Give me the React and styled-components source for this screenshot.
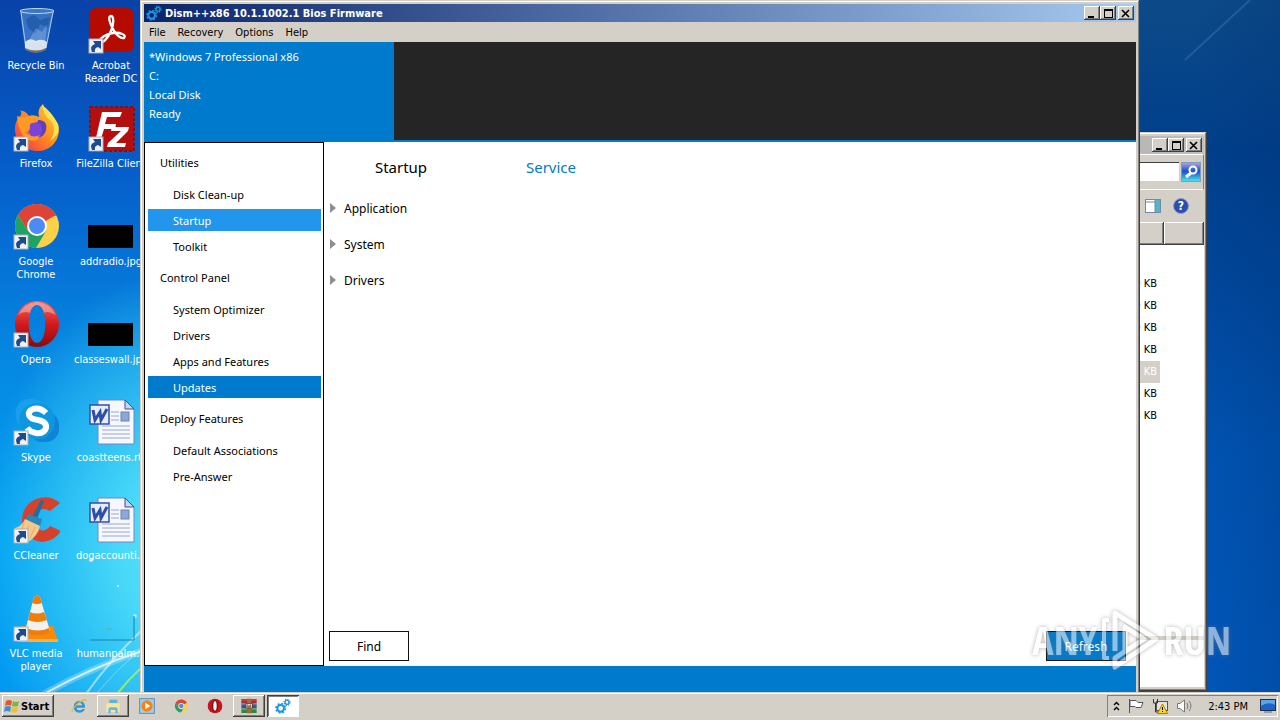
import React from 'react'
import styled, { createGlobalStyle } from 'styled-components'


const desktopIcons = [
    { name: 'Recycle Bin', icon: 'bin' },
    { name: 'Firefox', icon: 'firefox', shortcut: true },
    { name: 'Google Chrome', icon: 'chrome', shortcut: true, wrap: true },
    { name: 'Opera', icon: 'opera', shortcut: true },
    { name: 'Skype', icon: 'skype', shortcut: true },
    { name: 'CCleaner', icon: 'ccleaner', shortcut: true },
    { name: 'VLC media player', icon: 'vlc', shortcut: true, wrap: true },
    { name: 'Acrobat Reader DC', icon: 'acrobat', shortcut: true, wrap: true },
    { name: 'FileZilla Client', icon: 'filezilla', shortcut: true },
    { name: 'addradio.jpg', icon: 'black' },
    { name: 'classeswall.jpg', icon: 'black' },
    { name: 'coastteens.rtf', icon: 'word' },
    { name: 'dogaccounti...', icon: 'word' },
    { name: 'humanpalm...', icon: 'faded' },
]

const sections = [
    { title: 'Utilities', items: ['Disk Clean-up', 'Startup', 'Toolkit'] },
    { title: 'Control Panel', items: ['System Optimizer', 'Drivers', 'Apps and Features', 'Updates'] },
    { title: 'Deploy Features', items: ['Default Associations', 'Pre-Answer'] },
]

const itemColors = { Startup: '#2196ec', Updates: '#007acc' }

const files = ['0 KB', '0 KB', '0 KB', '7 KB', '2 KB', '1 KB', '8 KB']

const taskbarItems = [
    { label: 'Internet Explorer', icon: 'ie' },
    { label: 'Windows Explorer', icon: 'folder', look: 'raised' },
    { label: 'Media Player', icon: 'wmp' },
    { label: 'Chrome', icon: 'chrome' },
    { label: 'Opera', icon: 'operaRed' },
    { label: 'WinRAR', icon: 'winrar', look: 'raised' },
    { label: 'Dism++', icon: 'gears', look: 'pressed' },
]


const art = {
    bin: (
        <>
            <path d="M8 5 L13 43 Q24 49 34 43 L42 5Z" fill="#7fb4e6" fillOpacity=".4" />
            <path d="M9 6 L14 42 M41 6 L34 42" stroke="#c9dff2" strokeOpacity=".8" />
            <path d="M14 13 L22 9 L28 14 L38 11 L36 22 L28 18 L24 28 L16 22Z" fill="#164f9c" fillOpacity=".55" />
            <path d="M16 36 L24 22 L30 26 L35 18 L33 38Z" fill="#b9d7f2" fillOpacity=".3" />
            <path d="M13 36 Q18 31 24 35 Q30 32 35 36 L34 43 Q24 48 13 43Z" fill="#e8eef2" fillOpacity=".9" />
            <path d="M13 42 Q24 47 34 42 L34 44 Q24 50 13 44Z" fill="#776f64" />
            <ellipse cx="25" cy="5" rx="17" ry="2.5" fill="#3a78bc" stroke="#c3d6e8" />
        </>
    ),
    firefox: (
        <>
            <path d="M3 25 C3 17 7 13 9 11 Q10 6 7 7 Q13 6 17 12 Q22 10 27 13 Q25 5 31 0 Q33 7 39 11 Q47 19 47 27 C46 39 37 47 26 47 C13 47 3 38 3 25Z" fill="url(#fox)" />
            <path d="M30 1 Q32 12 38 16 Q46 24 38 37 Q49 30 46 20 Q39 7 30 1Z" fill="#ffe14b" />
            <circle cx="25" cy="25" r="9" fill="#7b43d9" />
            <path d="M5 12 Q13 15 17 12 Q22 11 27 16 Q25 19 20 19 Q17 20 18 24 Q17 28 13 28 Q20 35 28 31 Q26 40 14 35 Q6 27 5 12Z" fill="#ff9a26" />
            <path d="M26 16 Q36 16 34 26 Q31 33 25 33 Q31 31 30 24 Q30 20 26 19Z" fill="#5b43b5" />
        </>
    ),
    chrome: (
        <>
            <circle cx="25" cy="24" r="22" fill="#fdd04a" />
            <path d="M25 24 L6 13 A22 22 0 0 1 44 13Z" fill="#db4437" />
            <path d="M25 14 L44 14 A22 22 0 0 0 6 13 L16 29Z" fill="#db4437" />
            <path d="M6 13 A22 22 0 0 0 24 46 L34 29 L25 34 L16 29Z" fill="#1da362" />
            <circle cx="25" cy="24" r="10" fill="#fff" />
            <circle cx="25" cy="24" r="8" fill="#4c8bf5" />
        </>
    ),
    opera: (
        <>
            <path fillRule="evenodd" d="M25 1 A22 23 0 1 1 24.9 1Z M25 5 C14 5 14 43 25 43 C36 43 36 5 25 5Z" fill="url(#operaRed)" />
            <path d="M6 15 Q12 3 25 2 Q38 3 44 15 Q35 10 32 13 Q30 5 25 5 Q20 5 18 13 Q12 10 6 15Z" fill="#fff" fillOpacity=".35" />
        </>
    ),
    operaRed: (
        <>
            <circle cx="24" cy="24" r="22" fill="#c8141c" />
            <ellipse cx="24" cy="24" rx="10" ry="18" fill="#8a0d12" />
            <ellipse cx="24" cy="24" rx="5" ry="14" fill="#fff" />
        </>
    ),
    skype: (
        <>
            <rect x="4" y="1" width="30" height="30" rx="13" fill="#1aa0ea" />
            <rect x="17" y="14" width="30" height="30" rx="13" fill="#0f83d6" />
            <circle cx="25" cy="23" r="18" fill="#0d97e0" />
            <path d="M34 15 Q28 9 21 11 Q16 13 17 17 Q18 21 26 22 Q35 24 34 30 Q32 36 24 35 Q18 34 15 30" fill="none" stroke="#fff" strokeWidth="6" />
        </>
    ),
    ccleaner: (
        <>
            <path d="M48 7 Q38 -2 24 3 Q9 10 10 27 Q13 44 30 46 Q43 45 49 35 L38 30 Q33 37 26 33 Q19 27 23 18 Q30 10 38 15Z" fill="#d7402b" />
            <path d="M29 4 L32 5 L25 23 L20 21Z" fill="#1d6f9f" />
            <path d="M16 18 L30 23 L28 31 L13 25Z" fill="#2c87b8" />
            <path d="M13 23 L28 30 Q26 40 16 46 L3 43 Q1 36 3 32 Q10 30 13 23Z" fill="#f3c98b" />
            <path d="M12 27 L7 42 M17 30 L12 44 M23 31 L18 42" stroke="#dcae74" strokeWidth="1" />
        </>
    ),
    vlc: (
        <>
            <path d="M9 32 L41 32 L46 47 L6 47Z" fill="#f58a0c" />
            <path d="M6 45 H46 V48 H6Z" fill="#ffb13c" />
            <path d="M22 3 Q25 0 28 3 L38 37 Q26 44 13 37Z" fill="#f3f1ee" />
            <path d="M22 3 Q25 0 28 3 L30 9 Q25 11 20 9Z M18 18 Q25 21 32 18 L35 26 Q25 30 16 26Z M14 34 Q26 39 37 34 L38 38 Q26 45 12 38Z" fill="#f07d0a" />
        </>
    ),
    acrobat: (
        <>
            <rect x="2" y="2" width="45" height="44" rx="7" fill="#b30b00" />
            <path d="M24 10 C21 10 22 16 26 23 C29 29 34 33 37 32 C40 29 33 26 26 27 C19 28 13 32 13 35 C15 39 21 32 24 25 C27 18 27 10 24 10Z" fill="none" stroke="#fff" strokeWidth="2.4" />
        </>
    ),
    filezilla: (
        <>
            <rect x="3" y="3" width="44" height="44" fill="#b50e0e" stroke="#7f1212" strokeWidth="2" strokeDasharray="3 2" />
            <path d="M15 8 H35 L33 13 H20 L18 20 H29 L28 25 H17 L13 38 H8Z" fill="#fff" />
            <path d="M25 23 H42 L41 27 L29 39 H39 L38 43 H20 L21 39 L34 27 H24Z" fill="#fff" />
        </>
    ),
    black: <rect x="1" y="23" width="45" height="23" fill="#000" />,
    word: (
        <>
            <path d="M11 2 H38 L47 11 V46 H11Z" fill="#f7f8ff" stroke="#7484c4" />
            <path d="M38 2 V11 H47Z" fill="#c8d4f5" stroke="#3c4f99" />
            <path d="M24 14 H32 M24 18 H32 M24 22 H32 M15 28 H43 M15 32 H43 M15 36 H43 M15 40 H43" stroke="#96a4d6" />
            <rect x="34" y="14" width="8" height="9" fill="#8ca8da" stroke="#6c80b8" />
            <rect x="3" y="7" width="19" height="19" fill="#e6edff" stroke="#3150a8" strokeWidth="1.5" />
            <path d="M6 12 L8 22 L13 14 L14 22 L20 11" fill="none" stroke="#2d4da6" strokeWidth="3" />
        </>
    ),
    faded: (
        <>
            <path d="M3 46 H47 V22" fill="none" stroke="#1d7fae" strokeWidth="1" />
            <path d="M19 35 H25" stroke="#4db98c" strokeWidth="1" />
        </>
    ),
    ie: (
        <>
            <path d="M42 29 H16 Q18 37 26 37 Q32 37 34 33 H42 Q37 44 25 44 Q8 42 8 26 Q9 9 26 8 Q43 10 42 29Z M16 22 H34 Q33 15 26 15 Q18 15 16 22Z" fill="#2c97dd" fillRule="evenodd" />
            <path d="M6 42 Q-3 46 5 33 Q18 10 40 3 Q50 2 43 14 Q46 6 38 8 Q17 18 6 36 Q2 44 10 41Z" fill="#e9b62c" />
        </>
    ),
    folder: (
        <>
            <path d="M6 8 H20 L23 12 H42 V42 H6Z" fill="#f0cf68" />
            <path d="M13 5 H37 V15 H13Z" fill="#5bb3e0" />
            <path d="M4 16 H44 V42 H4Z" fill="#fbe69a" />
            <path d="M10 46 V34 Q10 28 16 28 H32 Q38 28 38 34 V46 H31 V36 H17 V46Z" fill="#68b6e6" />
        </>
    ),
    wmp: (
        <>
            <rect x="2" y="2" width="44" height="44" fill="#a5cdea" stroke="#4c91c7" strokeWidth="3" />
            <circle cx="24" cy="24" r="17" fill="#f58412" />
            <path d="M19 14 L34 24 L19 34Z" fill="#fff" />
        </>
    ),
    winrar: (
        <>
            <rect x="1" y="3" width="46" height="13" fill="#b32638" />
            <rect x="1" y="17" width="46" height="13" fill="#3553a5" />
            <rect x="1" y="31" width="46" height="14" fill="#2e8742" />
            <path d="M1 6 H47 M1 20 H47 M1 34 H47" stroke="#e9d2a8" strokeWidth="1" />
            <rect x="18" y="2" width="13" height="44" fill="#a7663c" />
            <rect x="15" y="16" width="19" height="14" fill="#e5dfd4" stroke="#3c2b20" strokeWidth="2" />
            <path d="M20 19 V27 H29 V19 M24 21 V27" stroke="#3c2b20" strokeWidth="2" fill="none" />
        </>
    ),
    gears: (
        <g fill="none" stroke="#1b95e0">
            <circle cx="17" cy="31" r="10" strokeWidth="6" />
            <circle cx="17" cy="31" r="14" strokeWidth="5" strokeDasharray="5.500 5.500" />
            <circle cx="36" cy="13" r="6" strokeWidth="4" />
            <circle cx="36" cy="13" r="9" strokeWidth="4" strokeDasharray="3.500 3.570" />
        </g>
    ),
}

const Icon = ({ name, size }) => (
    <Glyph width={size} height={size} viewBox="0 0 48 48" fill="none" aria-hidden="true">
        {art[name]}
    </Glyph>
)

const ShortcutMark = () => (
    <Mark width="16" height="16" viewBox="0 0 16 16" aria-hidden="true">
        <rect x="1" y="1" width="14" height="14" fill="#f1f3f6" stroke="#a9b0bb" />
        <path d="M4 14 Q1 8 7 6 L5 3 H13 V11 L10 9 Q6 10 7 14Z" fill="#1c4b91" />
    </Mark>
)

const WindowControls = () => (
    <Controls>
        <ControlButton aria-label="Minimize">
            <svg width="10" height="9"><rect x="1" y="7" width="6" height="2" /></svg>
        </ControlButton>
        <ControlButton aria-label="Maximize">
            <svg width="10" height="9"><path d="M1 0 H10 V9 H1Z M2 2 V8 H9 V2Z" fillRule="evenodd" /></svg>
        </ControlButton>
        <ControlButton aria-label="Close" $spaced>
            <svg width="10" height="9"><path d="M1 1 L8 8 M8 1 L1 8" stroke="#000" strokeWidth="1.6" /></svg>
        </ControlButton>
    </Controls>
)

const Wallpaper = () => (
    <Streaks aria-hidden="true">
        <defs>
            <linearGradient id="fox" x1="1" y1="0" x2="0" y2="1">
                <stop offset="0" stopColor="#ffdc3e" />
                <stop offset=".5" stopColor="#ff8a1e" />
                <stop offset="1" stopColor="#f4264f" />
            </linearGradient>
            <linearGradient id="operaRed" x1="0" y1="0" x2="0" y2="1">
                <stop offset="0" stopColor="#f06a62" />
                <stop offset=".5" stopColor="#d3191c" />
                <stop offset="1" stopColor="#8e0a0c" />
            </linearGradient>
        </defs>
        <path d="M44 694 Q90 668 142 651" stroke="#fff" strokeOpacity=".25" strokeWidth="7" />
        <path d="M44 694 Q90 668 142 651" stroke="#fff" strokeOpacity=".7" strokeWidth="2" />
        <path d="M86 694 Q110 660 142 630" stroke="#fff" strokeOpacity=".5" strokeWidth="2" />
        <path d="M96 694 Q116 670 142 648" stroke="#d9ffff" strokeOpacity=".4" />
        <path d="M117 694 Q128 680 142 667" stroke="#a6f05a" strokeOpacity=".9" strokeWidth="2" />
        <path d="M1185 60 L1250 0" stroke="#5b8fc4" strokeOpacity=".3" strokeWidth="2" />
        <circle cx="91" cy="560" r="2" fill="#fff" fillOpacity=".7" />
        <circle cx="118" cy="586" r="1" fill="#fff" fillOpacity=".7" />
        <circle cx="135" cy="616" r="2" fill="#fff" fillOpacity=".5" />
    </Streaks>
)

const Dism = () => (
    <AppWindow>
        <TitleBar $active>
            <Icon name="gears" size={16} />
            <Title>Dism++x86 10.1.1002.1 Bios Firmware</Title>
            <WindowControls />
        </TitleBar>
        <MenuBar>
            <MenuButton>File</MenuButton>
            <MenuButton>Recovery</MenuButton>
            <MenuButton>Options</MenuButton>
            <MenuButton>Help</MenuButton>
        </MenuBar>
        <Header>
            <SystemTile>
                <li>*Windows 7 Professional x86</li>
                <li>C:</li>
                <li>Local Disk</li>
                <li>Ready</li>
            </SystemTile>
        </Header>
        <Body>
            <Sidebar>
                {sections.map(section => (
                    <section key={section.title}>
                        <SectionTitle>{section.title}</SectionTitle>
                        <SectionItems>
                            {section.items.map(item => (
                                <SideButton key={item} $color={itemColors[item]}>{item}</SideButton>
                            ))}
                        </SectionItems>
                    </section>
                ))}
            </Sidebar>
            <Content>
                <Tabs>
                    <Tab>Startup</Tab>
                    <Tab $link>Service</Tab>
                </Tabs>
                <Tree>
                    {['Application', 'System', 'Drivers'].map(group => (
                        <TreeButton key={group}>
                            <svg width="6" height="10"><path d="M0 0 L6 5 L0 10Z" fill="#8f8f8f" /></svg>
                            {group}
                        </TreeButton>
                    ))}
                </Tree>
                <Actions>
                    <ActionButton>Find</ActionButton>
                    <ActionButton $primary>Refresh</ActionButton>
                </Actions>
            </Content>
        </Body>
        <Footer />
    </AppWindow>
)

const Explorer = () => (
    <ExplorerWindow>
        <TitleBar>
            <WindowControls />
        </TitleBar>
        <AddressBar>
            <SearchInput type="text" aria-label="Search" />
            <SearchButton aria-label="Go">
                <svg width="18" height="18" fill="none">
                    <path d="M9 10 L4 14" stroke="#fff" strokeWidth="3" />
                    <circle cx="11" cy="7" r="3.5" stroke="#fff" strokeWidth="2" />
                </svg>
            </SearchButton>
        </AddressBar>
        <ExplorerTools>
            <PlainButton aria-label="Preview pane">
                <svg width="16" height="14">
                    <rect x=".5" y=".5" width="15" height="13" fill="#fff" stroke="#6b8ca8" />
                    <rect x="10" y="1" width="5" height="12" fill="#59b4c2" />
                    <path d="M1 3 H10 M10 1 V13" stroke="#6b8ca8" />
                </svg>
            </PlainButton>
            <PlainButton aria-label="Help">
                <HelpBadge>?</HelpBadge>
            </PlainButton>
        </ExplorerTools>
        <FileArea>
            <FileTable>
                <thead>
                    <tr>
                        <th aria-label="Size" />
                        <LastHead aria-label="More" />
                    </tr>
                </thead>
                <tbody>
                    {files.map((size, i) => (
                        <tr key={i}>
                            <td><FileSize $selected={i === 4}>{size}</FileSize></td>
                            <td />
                        </tr>
                    ))}
                </tbody>
            </FileTable>
        </FileArea>
        <DetailsPane />
    </ExplorerWindow>
)

const Taskbar = () => (
    <Bar>
        <StartButton>
            <svg width="16" height="16" aria-hidden="true">
                <path d="M2 3 Q5 1 8 3 L7 8 Q4 6 1 8Z" fill="#e8562a" />
                <path d="M9 3 Q12 5 15 3 L14 8 Q11 9 8 8Z" fill="#79b93c" />
                <path d="M1 9 Q4 7 7 9 L6 14 Q3 12 0 14Z" fill="#3b8fd8" />
                <path d="M8 9 Q11 10 14 9 L13 14 Q10 15 7 14Z" fill="#f3bd2c" />
            </svg>
            Start
        </StartButton>
        <TaskList>
            {taskbarItems.map(item => (
                <TaskButton key={item.label} aria-label={item.label} $look={item.look}>
                    <Icon name={item.icon} size={item.icon === 'chrome' ? 14 : 16} />
                </TaskButton>
            ))}
        </TaskList>
        <Tray>
            <svg width="7" height="10" fill="none" stroke="#000" strokeWidth="1.4">
                <path d="M1 4 L3.5 1.5 L6 4 M1 9 L3.5 6.5 L6 9" />
            </svg>
            <svg width="16" height="16" fill="#fff" stroke="#555">
                <path d="M1.5 1 V15 M2 2.5 H8 L10 4.500 H15 L13 9.500 H8 L7 8.500 H2Z" />
            </svg>
            <svg width="16" height="16" fill="none">
                <rect x="4.500" y="3.500" width="11" height="9" fill="#e3e3e3" stroke="#555" />
                <path d="M1.500 1 V5 H5.500 V1 M3.500 5 V14 H6" stroke="#333" />
                <path d="M10.500 6 L15.500 15.500 H5.500Z" fill="#ffd52a" stroke="#a88400" />
                <path d="M10.500 9 V12 M10.500 13 V14" stroke="#000" />
            </svg>
            <svg width="18" height="16" fill="none" stroke="#777">
                <path d="M1.500 5.500 H4 L8.500 2 V14 L4 10.500 H1.500Z" fill="#fff" />
                <path d="M11 5 Q13 8 11 11 M13 3 Q17 8 13 13" />
            </svg>
            <Clock>2:43 PM</Clock>
            <svg width="16" height="14">
                <rect x=".5" y=".5" width="15" height="11" fill="#1d62c4" stroke="#22304f" />
                <path d="M1 7 Q8 2 15 6 V1 H1Z" fill="#5da4ea" />
                <rect x="4" y="12" width="8" height="2" fill="#8fa0b5" />
            </svg>
        </Tray>
    </Bar>
)

export default function App() {
    return (
        <Desktop>
            <GlobalStyle />
            <Workspace>
                <Wallpaper />
                <IconGrid>
                    {desktopIcons.map(item => (
                        <DesktopIcon key={item.name} href="#">
                            <IconBox>
                                <Icon name={item.icon} size={48} />
                                {item.shortcut && <ShortcutMark />}
                            </IconBox>
                            <IconLabel $wrap={item.wrap}>{item.name}</IconLabel>
                        </DesktopIcon>
                    ))}
                </IconGrid>
                <Explorer />
                <Dism />
                <Watermark>
                    <span>ANY</span>
                    <svg width="60" height="64" fill="none" stroke="#fff" strokeWidth="5" strokeLinejoin="round" aria-hidden="true">
                        <path d="M9 12 H4 V50 H9" strokeWidth="4" />
                        <path d="M15 43 V5 L56 31 L15 59 V50 L44 31 L25 19 V44" />
                    </svg>
                    <span>RUN</span>
                </Watermark>
            </Workspace>
            <Taskbar />
        </Desktop>
    )
}


const GlobalStyle = createGlobalStyle`
    * {
        box-sizing: border-box;
    }
    body {
        margin: 0;
        font-family: "DejaVu Sans Condensed", "DejaVu Sans", sans-serif;
        font-size: 11px;
        color: #000;
    }
    button, input {
        font: inherit;
        color: inherit;
        border: 0;
        padding: 0;
        background: none;
    }
`

const raised = `
    background: #d4d0c8;
    box-shadow: inset -1px -1px #404040, inset 1px 1px #fff, inset -2px -2px #808080;
`

const Desktop = styled.div`
    display: flex;
    flex-direction: column;
    height: 100vh;
`

const Workspace = styled.main`
    position: relative;
    flex: 1;
    min-height: 0;
    overflow: hidden;
    background:
        radial-gradient(200px 280px at 180px 550px, #60e4fa 0, #48d8f8 30%, #12a4f000 100%),
        linear-gradient(90deg, transparent 93%, #00307040),
        linear-gradient(#0c4a88 0, #003f8c 150px, #00479c 280px, #0054b4 450px, #0058bc 692px) 100% 0 / 20% 100% no-repeat,
        linear-gradient(#0842a8 0, #0560cc 180px, #0588e2 360px, #00a0f2 540px, #0098f0 692px);
`

const Streaks = styled.svg`
    position: absolute;
    inset: 0;
    width: 100%;
    height: 100%;
    fill: none;
`

const IconGrid = styled.nav`
    position: relative;
    display: grid;
    grid-auto-flow: column;
    grid-template-rows: repeat(7, 98px);
    grid-template-columns: 72px 72px;
    column-gap: 3px;
`

const DesktopIcon = styled.a`
    display: flex;
    flex-direction: column;
    align-items: center;
    gap: 5px;
    padding-top: 6px;
    color: #fff;
    text-decoration: none;
`

const IconBox = styled.div`
    position: relative;
    height: 48px;
`

const Glyph = styled.svg`
    display: block;
    flex: none;
`

const Mark = styled.svg`
    position: absolute;
    left: 1px;
    bottom: 0;
`

const IconLabel = styled.span`
    line-height: 13px;
    text-align: center;
    white-space: ${props => props.$wrap ? 'normal' : 'nowrap'};
`

const Frame = styled.section`
    position: absolute;
    display: flex;
    flex-direction: column;
    padding: 4px;
    background: #d4d0c8;
    box-shadow: inset -1px -1px #404040, inset 1px 1px #d4d0c8, inset -2px -2px #808080, inset 2px 2px #fff;
`

const AppWindow = styled(Frame)`
    inset: 0 140px -4px 140px;
`

const ExplorerWindow = styled(Frame)`
    top: 132px;
    right: 73px;
    bottom: 1px;
    width: 480px;
    padding-right: 3px;
`

const TitleBar = styled.header`
    display: flex;
    flex: none;
    align-items: center;
    gap: 3px;
    height: 18px;
    padding: 0 2px;
    color: #fff;
    background: ${props => props.$active ? 'linear-gradient(90deg, #0a246a, #a6caf0)' : 'linear-gradient(90deg, #808080, #c0c0c0)'};
`

const Title = styled.h1`
    margin: 0;
    font-size: 11px;
    font-weight: bold;
`

const Controls = styled.div`
    display: flex;
    margin-left: auto;
`

const ControlButton = styled.button`
    ${raised}
    display: grid;
    place-items: center;
    width: 16px;
    height: 14px;
    margin-left: ${props => props.$spaced ? '2px' : '0'};
`

const MenuBar = styled.nav`
    display: flex;
    flex: none;
    align-items: flex-end;
    gap: 12px;
    height: 20px;
    padding: 0 5px;
`

const MenuButton = styled.button`
    line-height: 18px;
`

const Header = styled.div`
    flex: none;
    height: 100px;
    background: #252525;
    border-bottom: 2px solid #007acc;
`

const SystemTile = styled.ul`
    width: 250px;
    height: 100%;
    margin: 0;
    padding: 5px;
    list-style: none;
    color: #fff;
    background: #007acc;
    font-family: "Noto Sans", sans-serif;
    font-size: 11px;
    line-height: 19px;
`

const Body = styled.div`
    display: flex;
    flex: 1;
    min-height: 0;
    background: #fff;
    font-family: "Noto Sans", sans-serif;
    font-size: 12px;
`

const Sidebar = styled.aside`
    width: 180px;
    padding: 0 2px 0 3px;
    border: 1px solid #000;
    font-size: 11px;
`

const SectionTitle = styled.h2`
    margin: 10px 0 9px;
    padding-left: 12px;
    font-size: 11px;
    font-weight: normal;
    line-height: 22px;

    section:first-child > & {
        margin-top: 9px;
    }
`

const SectionItems = styled.div`
    display: flex;
    flex-direction: column;
    gap: 4px;
`

const SideButton = styled.button`
    height: 22px;
    padding-left: 25px;
    text-align: left;
    color: ${props => props.$color ? '#fff' : '#000'};
    background: ${props => props.$color || 'none'};
`

const Content = styled.div`
    display: flex;
    flex: 1;
    flex-direction: column;
    padding: 9px 10px 5px 2px;
`

const Tabs = styled.div`
    display: flex;
`

const Tab = styled.button`
    width: 150px;
    height: 32px;
    font-size: 15px;
    color: ${props => props.$link ? '#007acc' : '#000'};
`

const Tree = styled.div`
    display: flex;
    flex-direction: column;
    align-items: flex-start;
    padding: 7px 0 0 4px;
`

const TreeButton = styled.button`
    display: flex;
    align-items: center;
    gap: 8px;
    height: 36px;
`

const Actions = styled.div`
    display: flex;
    justify-content: space-between;
    margin-top: auto;
    padding-left: 3px;
`

const ActionButton = styled.button`
    width: 80px;
    height: 30px;
    border: 1px solid #111;
    color: ${props => props.$primary ? '#fff' : '#000'};
    background: ${props => props.$primary ? '#007acc' : '#fff'};
`

const Footer = styled.footer`
    flex: none;
    height: 26px;
    background: #007acc;
`

const AddressBar = styled.div`
    display: flex;
    flex: none;
    align-items: center;
    gap: 2px;
    height: 36px;
    padding: 0 2px;
    border-top: 1px solid #fff;
    border-right: 1px solid #808080;
    border-bottom: 1px solid #fff;
`

const SearchInput = styled.input`
    flex: 1;
    height: 20px;
    background: #fff;
    border-top: 1px solid #404040;
    border-bottom: 1px solid #d4d0c8;
`

const SearchButton = styled.button`
    display: grid;
    place-items: center;
    width: 20px;
    height: 20px;
    border: 1px solid #7f9db9;
    background: linear-gradient(#a9a0e8, #1f50c8 45%, #2c8ed8 70%, #4fe0ec);
`

const ExplorerTools = styled.div`
    display: flex;
    flex: none;
    align-items: center;
    justify-content: flex-end;
    gap: 12px;
    height: 32px;
    padding-right: 15px;
`

const PlainButton = styled.button`
    display: flex;
`

const HelpBadge = styled.span`
    width: 16px;
    height: 16px;
    border: 1px solid #8d9cc8;
    border-radius: 50%;
    color: #fff;
    background: #2b4db0;
    font-size: 12px;
    font-weight: bold;
    line-height: 14px;
`

const FileArea = styled.div`
    flex: 1;
    min-height: 0;
    background: #fff;
`

const FileTable = styled.table`
    width: 100%;
    border-spacing: 0;

    th {
        ${raised}
        height: 23px;
        padding: 0;
    }
    td {
        height: 22px;
        padding: 0;
        text-align: right;
    }
    tbody::before {
        content: "";
        display: block;
        height: 28px;
    }
`

const LastHead = styled.th`
    width: 40px;
`

const FileSize = styled.span`
    display: block;
    margin-right: 4px;
    padding-right: 3px;
    line-height: 22px;
    color: ${props => props.$selected ? '#fff' : '#000'};
    background: ${props => props.$selected ? '#d4d0c8' : 'none'};
`

const DetailsPane = styled.div`
    flex: none;
    height: 51px;
    border-top: 4px solid #d4d0c8;
    background: #fff;
`

const Watermark = styled.div`
    position: absolute;
    right: 49px;
    bottom: 20px;
    display: flex;
    align-items: center;
    gap: 3px;
    color: #fff;
    opacity: .55;
    pointer-events: none;
    font-family: "Open Sans Condensed", "Roboto Condensed", "Liberation Sans Narrow", sans-serif;
    font-size: 40px;
    font-weight: 300;
    line-height: 64px;
    filter: drop-shadow(0 0 2px #777);
`

const Bar = styled.footer`
    display: flex;
    flex: none;
    align-items: center;
    height: 28px;
    padding: 2px;
    background: #d4d0c8;
    box-shadow: inset 0 1px #d4d0c8, inset 0 2px #fff;
`

const StartButton = styled.button`
    ${raised}
    display: flex;
    align-items: center;
    gap: 1px;
    height: 22px;
    padding: 0 5px 0 2px;
    font-weight: bold;
`

const TaskList = styled.div`
    display: flex;
    gap: 2px;
    margin-left: 9px;
`

const TaskButton = styled.button`
    display: grid;
    place-items: center;
    width: 32px;
    height: 22px;
    ${props => props.$look === 'raised' && raised}
    ${props => props.$look === 'pressed' && 'background: #fff; box-shadow: inset 1px 1px #404040, inset -1px -1px #fff, inset 2px 2px #808080;'}
`

const Tray = styled.div`
    display: flex;
    align-items: center;
    gap: 8px;
    height: 22px;
    margin-left: auto;
    padding: 0 2px 0 6px;
    box-shadow: inset 1px 1px #808080, inset -1px -1px #fff;
`

const Clock = styled.time`
    margin: 0 4px 0 6px;
`
